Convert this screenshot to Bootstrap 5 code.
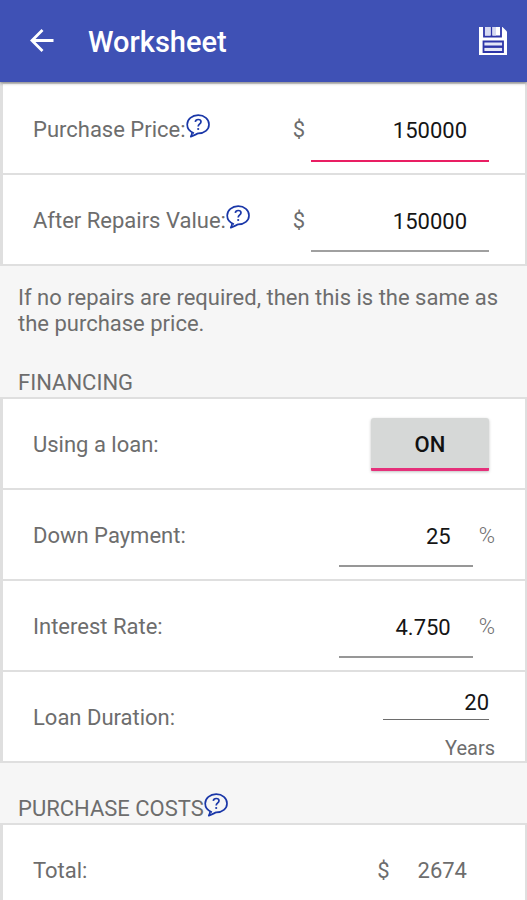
<!DOCTYPE html>
<html lang="en">
<head>
<meta charset="utf-8">
<meta name="viewport" content="width=device-width, initial-scale=1">
<title>Worksheet</title>
<link href="https://cdn.jsdelivr.net/npm/bootstrap@5.3.0/dist/css/bootstrap.min.css" rel="stylesheet">
<style>
body{font-family:Roboto,"Liberation Sans",sans-serif;font-size:22px;line-height:26px;color:#6d6d6d;background:#f6f6f6;overflow-x:hidden}
.app-bar{height:82px;background:#3f51b5;padding:0 18px 0 28px;box-shadow:0 1px 3px rgba(0,0,0,.45);z-index:2}
.app-title{font-size:29px;line-height:34px;font-weight:500;color:#fff;margin-left:32px;padding-top:2px}
.icon-btn{border:0;background:none;padding:0;line-height:0;color:#fff}
.sheet-group{border:solid #dfdfdf;border-width:2px 2px 0 3px;background:#fff}
.sheet-row{height:91px;border-bottom:2px solid #dfdfdf;padding:2px 36px 0 30px}
.row-unit{padding-right:30px}
.unit-gap{margin-right:6px}
.field{width:178px;height:62px;border:0;border-bottom:2px solid #a0a0a0;background:none;text-align:right;color:#151515;padding:3px 22px 0 0;border-radius:0;outline:0}
.field-current{height:64px;border-bottom-color:#e91e63}
.field-rate{width:134px;border-bottom-color:#979797}
.field-years{width:106px;height:35px;padding:0;border-bottom:1px solid #6d6d6d}
.years-stack{padding-top:10px}
.unit-years{font-size:20px;line-height:24px}
.help-btn{color:#1a37a8;margin:-3px 0 5px}
.toggle-btn{width:118px;height:53px;border:0;border-bottom:3px solid #e5307a;border-radius:3px 3px 1px 1px;background:#d6d8d7;color:#111;font-weight:500;padding-top:4px;box-shadow:0 1px 3px rgba(0,0,0,.25)}
.note-text{padding:19px 18px 0}
.section-title{font-size:22px;line-height:26px;font-weight:400;padding:33px 18px 1px}
.total-value{padding:0 22px 0 28px}
</style>
<script src="https://cdn.jsdelivr.net/npm/bootstrap@5.3.0/dist/js/bootstrap.bundle.min.js" defer></script>
</head>
<body>
<svg class="d-none" aria-hidden="true">
<symbol id="help" viewBox="0 0 24 24"><path d="M8 19.200C3.800 17.800 1.200 14.500 1.200 10.600 1.200 5.300 6 1.200 12.200 1.200S23 5.300 23 10.400 18.400 19.400 12.200 19.400C10.800 19.900 8.500 21.200 4.800 22.600 5.800 21.300 6.200 20.300 6 18.200" fill="none" stroke="currentColor" stroke-width="1.700" stroke-linejoin="round"/><path d="M9.300 7.800C9.500 6.200 10.700 5.500 12.200 5.500 13.900 5.500 15 6.400 15 7.800 15 9.900 12.200 9.900 12.200 12.500" fill="none" stroke="currentColor" stroke-width="1.700"/><circle cx="12.200" cy="15" r="1.100" fill="currentColor"/></symbol>
</svg>
<header class="app-bar d-flex align-items-center position-relative">
<button class="icon-btn" type="button" aria-label="Back"><svg width="28" height="28" viewBox="0 0 28 28"><path d="M25.500 13.500H4M14.500 3 4 13.500 14.500 24" fill="none" stroke="#fff" stroke-width="2.800"/></svg></button>
<h1 class="app-title mb-0 flex-grow-1">Worksheet</h1>
<button class="icon-btn" type="button" aria-label="Save"><svg width="32" height="32" viewBox="0 0 32 32"><path d="M2 2H25.500L30 6.500V30H2Z" fill="#fff"/><path d="M7 2V11.500H24V2M14.500 2V11.500" fill="none" stroke="#2d35a8" stroke-width="1.800"/><path d="M8 2H13.500V10.500H8ZM15.500 2H19V10.500H15.500Z" fill="#d5d9f2"/><path d="M6.500 16.500H26V27H6.500Z" fill="#e4e6f6" stroke="#2d35a8" stroke-width="1.800"/><path d="M7 21.700H26" stroke="#2d35a8" stroke-width="2.400"/></svg></button>
</header>
<main>
<section class="sheet-group">
<div class="sheet-row d-flex align-items-center">
<label for="price">Purchase Price:</label><button class="icon-btn help-btn" type="button" aria-label="Purchase price help"><svg width="24" height="24"><use href="#help"/></svg></button>
<span class="ms-auto unit-gap">$</span><input class="field field-current" id="price" inputmode="numeric" value="150000">
</div>
<div class="sheet-row d-flex align-items-center">
<label for="arv">After Repairs Value:</label><button class="icon-btn help-btn" type="button" aria-label="After repairs value help"><svg width="24" height="24"><use href="#help"/></svg></button>
<span class="ms-auto unit-gap">$</span><input class="field" id="arv" inputmode="numeric" value="150000">
</div>
</section>
<p class="note-text mb-0">If no repairs are required, then this is the same as the purchase price.</p>
<h2 class="section-title mb-0">FINANCING</h2>
<section class="sheet-group">
<div class="sheet-row d-flex align-items-center justify-content-between">
<span id="loan-label">Using a loan:</span><button class="toggle-btn" type="button" aria-pressed="true" aria-describedby="loan-label">ON</button>
</div>
<div class="sheet-row row-unit d-flex align-items-center">
<label for="down">Down Payment:</label><input class="field field-rate ms-auto unit-gap" id="down" inputmode="decimal" value="25"><span class="fw-light">%</span>
</div>
<div class="sheet-row row-unit d-flex align-items-center">
<label for="rate">Interest Rate:</label><input class="field field-rate ms-auto unit-gap" id="rate" inputmode="decimal" value="4.750"><span class="fw-light">%</span>
</div>
<div class="sheet-row row-unit d-flex align-items-center justify-content-between">
<label for="years">Loan Duration:</label>
<div class="years-stack d-flex flex-column align-items-end gap-3"><input class="field field-years unit-gap" id="years" inputmode="numeric" value="20"><span class="unit-years">Years</span></div>
</div>
</section>
<h2 class="section-title mb-0 d-flex align-items-center">PURCHASE COSTS<button class="icon-btn help-btn" type="button" aria-label="Purchase costs help"><svg width="24" height="24"><use href="#help"/></svg></button></h2>
<section class="sheet-group">
<div class="sheet-row d-flex align-items-center">
<span>Total:</span><span class="ms-auto">$</span><output class="total-value">2674</output>
</div>
</section>
</main>
</body>
</html>
